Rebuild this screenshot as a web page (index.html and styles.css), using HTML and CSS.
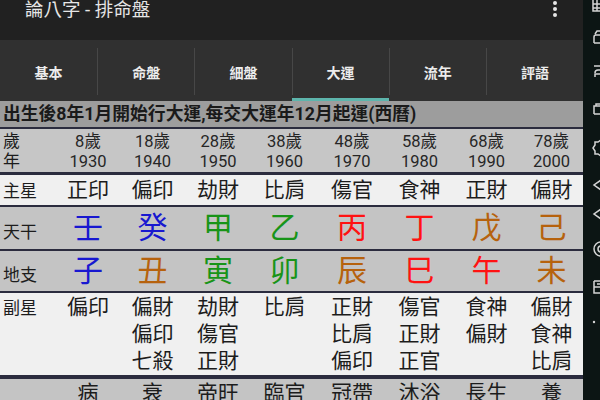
FILE: index.html
```html
<!DOCTYPE html>
<html lang="zh-Hant">
<head>
<meta charset="utf-8">
<title>論八字 - 排命盤</title>
<link rel="stylesheet" href="styles.css">
</head>
<body>
<div class="screen">
  <div class="app">
    <header class="appbar">
      <span class="title">論八字 - 排命盤</span>
      <span class="more"><i></i><i></i><i></i></span>
    </header>
    <nav class="tabs">
      <div class="tab"><span class="tab-label">基本</span><span class="tab-ink"></span></div>
      <div class="tab"><span class="tab-label">命盤</span><span class="tab-ink"></span></div>
      <div class="tab"><span class="tab-label">細盤</span><span class="tab-ink"></span></div>
      <div class="tab active"><span class="tab-label">大運</span><span class="tab-ink"></span></div>
      <div class="tab"><span class="tab-label">流年</span><span class="tab-ink"></span></div>
      <div class="tab"><span class="tab-label">評語</span><span class="tab-ink"></span></div>
    </nav>
    <div class="chart">
      <div class="head">出生後8年1月開始行大運,每交大運年12月起運(西曆)</div>
      <div class="row ages">
        <div class="lab">歲<br>年</div>
        <div class="cell">8歲<br>1930</div>
        <div class="cell">18歲<br>1940</div>
        <div class="cell">28歲<br>1950</div>
        <div class="cell">38歲<br>1960</div>
        <div class="cell">48歲<br>1970</div>
        <div class="cell">58歲<br>1980</div>
        <div class="cell">68歲<br>1990</div>
        <div class="cell">78歲<br>2000</div>
      </div>
      <div class="row main">
        <div class="lab">主星</div>
        <div class="cell">正印</div>
        <div class="cell">偏印</div>
        <div class="cell">劫財</div>
        <div class="cell">比肩</div>
        <div class="cell">傷官</div>
        <div class="cell">食神</div>
        <div class="cell">正財</div>
        <div class="cell">偏財</div>
      </div>
      <div class="row stem">
        <div class="lab">天干</div>
        <div class="cell blue">壬</div>
        <div class="cell blue">癸</div>
        <div class="cell green">甲</div>
        <div class="cell green">乙</div>
        <div class="cell red">丙</div>
        <div class="cell red">丁</div>
        <div class="cell brown">戊</div>
        <div class="cell brown">己</div>
      </div>
      <div class="row branch">
        <div class="lab">地支</div>
        <div class="cell blue">子</div>
        <div class="cell brown">丑</div>
        <div class="cell green">寅</div>
        <div class="cell green">卯</div>
        <div class="cell brown">辰</div>
        <div class="cell red">巳</div>
        <div class="cell red">午</div>
        <div class="cell brown">未</div>
      </div>
      <div class="row sub">
        <div class="lab">副星</div>
        <div class="cell">偏印</div>
        <div class="cell">偏財<br>偏印<br>七殺</div>
        <div class="cell">劫財<br>傷官<br>正財</div>
        <div class="cell">比肩</div>
        <div class="cell">正財<br>比肩<br>偏印</div>
        <div class="cell">傷官<br>正財<br>正官</div>
        <div class="cell">食神<br>偏財</div>
        <div class="cell">偏財<br>食神<br>比肩</div>
      </div>
      <div class="row phase">
        <div class="lab"></div>
        <div class="cell">病</div>
        <div class="cell">衰</div>
        <div class="cell">帝旺</div>
        <div class="cell">臨官</div>
        <div class="cell">冠帶</div>
        <div class="cell">沐浴</div>
        <div class="cell">長生</div>
        <div class="cell">養</div>
      </div>
    </div>
  </div>
  <aside class="rail">
    <svg width="17" height="400" viewBox="0 0 17 400" fill="none" stroke="#d4d4d4" stroke-width="1.5">
      <path d="M10 0v11h8M10 4h8M10 8h8M14 0v11"/>
      <path d="M11 43v-6a2 2 0 0 1 2-2h5M11 43h7M12 34l2-3h4"/>
      <path d="M12 73a3 3 0 0 1 3-3h3M11 66h7M12 77v-3h6"/>
      <path d="M11 114v-8h7M11 114h7M13 106v-2h5"/>
      <path d="M18 140l-3 2-3 0 0 3-2 3 2 3 0 3 3 0 3 2"/>
      <path d="M18 180l-7 5 7 5"/>
      <path d="M18 209l-7 5 7 5"/>
      <path d="M18 242a7 7 0 0 0 0 14M18 246a3 3 0 0 0 0 6"/>
      <path d="M11 281v12h7M11 281h7M11 287h7M14 284h4"/>
      <circle cx="11" cy="322" r="1.2" fill="#d4d4d4" stroke="none"/>
    </svg>
  </aside>
</div>
</body>
</html>
```
FILE: styles.css
```css
* { box-sizing: border-box; }
html, body { margin: 0; padding: 0; }
body {
  width: 600px;
  height: 400px;
  overflow: hidden;
  background: #0c1514;
  font-family: Roboto, "Noto Sans CJK TC", sans-serif;
}
.screen { display: flex; height: 400px; }
.app {
  width: 583px;
  flex: none;
  display: flex;
  flex-direction: column;
  background: #c4c4c4;
  overflow: hidden;
}
.rail { flex: 1; background: #0c1514; }
.rail svg { display: block; }

/* App bar */
.appbar {
  height: 40px;
  flex: none;
  background: #212121;
  display: flex;
  justify-content: space-between;
  align-items: flex-start;
  padding: 0 26px 0 25px;
}
.title { color: #e6e6e6; font-size: 18.5px; line-height: 20px; }
.more { display: flex; flex-direction: column; gap: 2px; padding-top: 1px; }
.more i { display: block; width: 4px; height: 4px; border-radius: 50%; background: #e6e6e6; }

/* Tabs */
.tabs { height: 61px; flex: none; background: #303030; display: flex; }
.tab { flex: 1; display: flex; flex-direction: column; }
.tab-label {
  flex: 1;
  margin: 8px 0 3px;
  display: flex;
  align-items: center;
  justify-content: center;
  color: #ececec;
  font-size: 14px;
  font-weight: bold;
  border-left: 1px solid #474747;
}
.tab:first-child .tab-label { border-left: none; }
.tab-ink { height: 3px; }
.tab.active .tab-ink { background: #5db5ac; }

/* Chart */
.chart { flex: 1; display: flex; flex-direction: column; }
.head {
  height: 28px;
  flex: none;
  padding-left: 3px;
  background: #9d9d9d;
  border-bottom: 2px solid #2b2c3e;
  color: #1a1a1a;
  font-size: 17.8px;
  font-weight: bold;
  line-height: 26px;
  white-space: nowrap;
}
.row {
  flex: none;
  display: grid;
  grid-template-columns: 56px 64px 65px 66px 67px 68px 67px 67px 63px;
  align-items: baseline;
  border-bottom: 2px solid #2b2c3e;
  color: #1c1c1c;
  white-space: nowrap;
}
.lab { padding-left: 3px; font-size: 17px; }
.cell { text-align: center; }

.ages {
  height: 46px;
  border-bottom-width: 3px;
  padding-top: 3px;
  background: #c6c6c6;
  color: #262626;
  font-size: 16.5px;
  line-height: 19.5px;
}
.ages .lab { font-size: 17px; color: #1c1c1c; }
.main { height: 32px; background: #f0f0f0; font-size: 21px; line-height: 30px; }
.stem { height: 44px; background: #c4c4c4; font-size: 30px; line-height: 42px; }
.branch { height: 42px; background: #c4c4c4; font-size: 30px; line-height: 40px; }
.sub {
  height: 86px;
  border-bottom-width: 4px;
  padding-top: 1px;
  background: #f0f0f0;
  font-size: 21px;
  line-height: 27px;
}
.phase {
  flex: 1;
  border-bottom: none;
  padding-top: 1px;
  background: #c4c4c4;
  font-size: 21px;
  line-height: 27px;
}

.blue { color: #1818d0; }
.green { color: #189418; }
.red { color: #ff1212; }
.brown { color: #b6620d; }
```
